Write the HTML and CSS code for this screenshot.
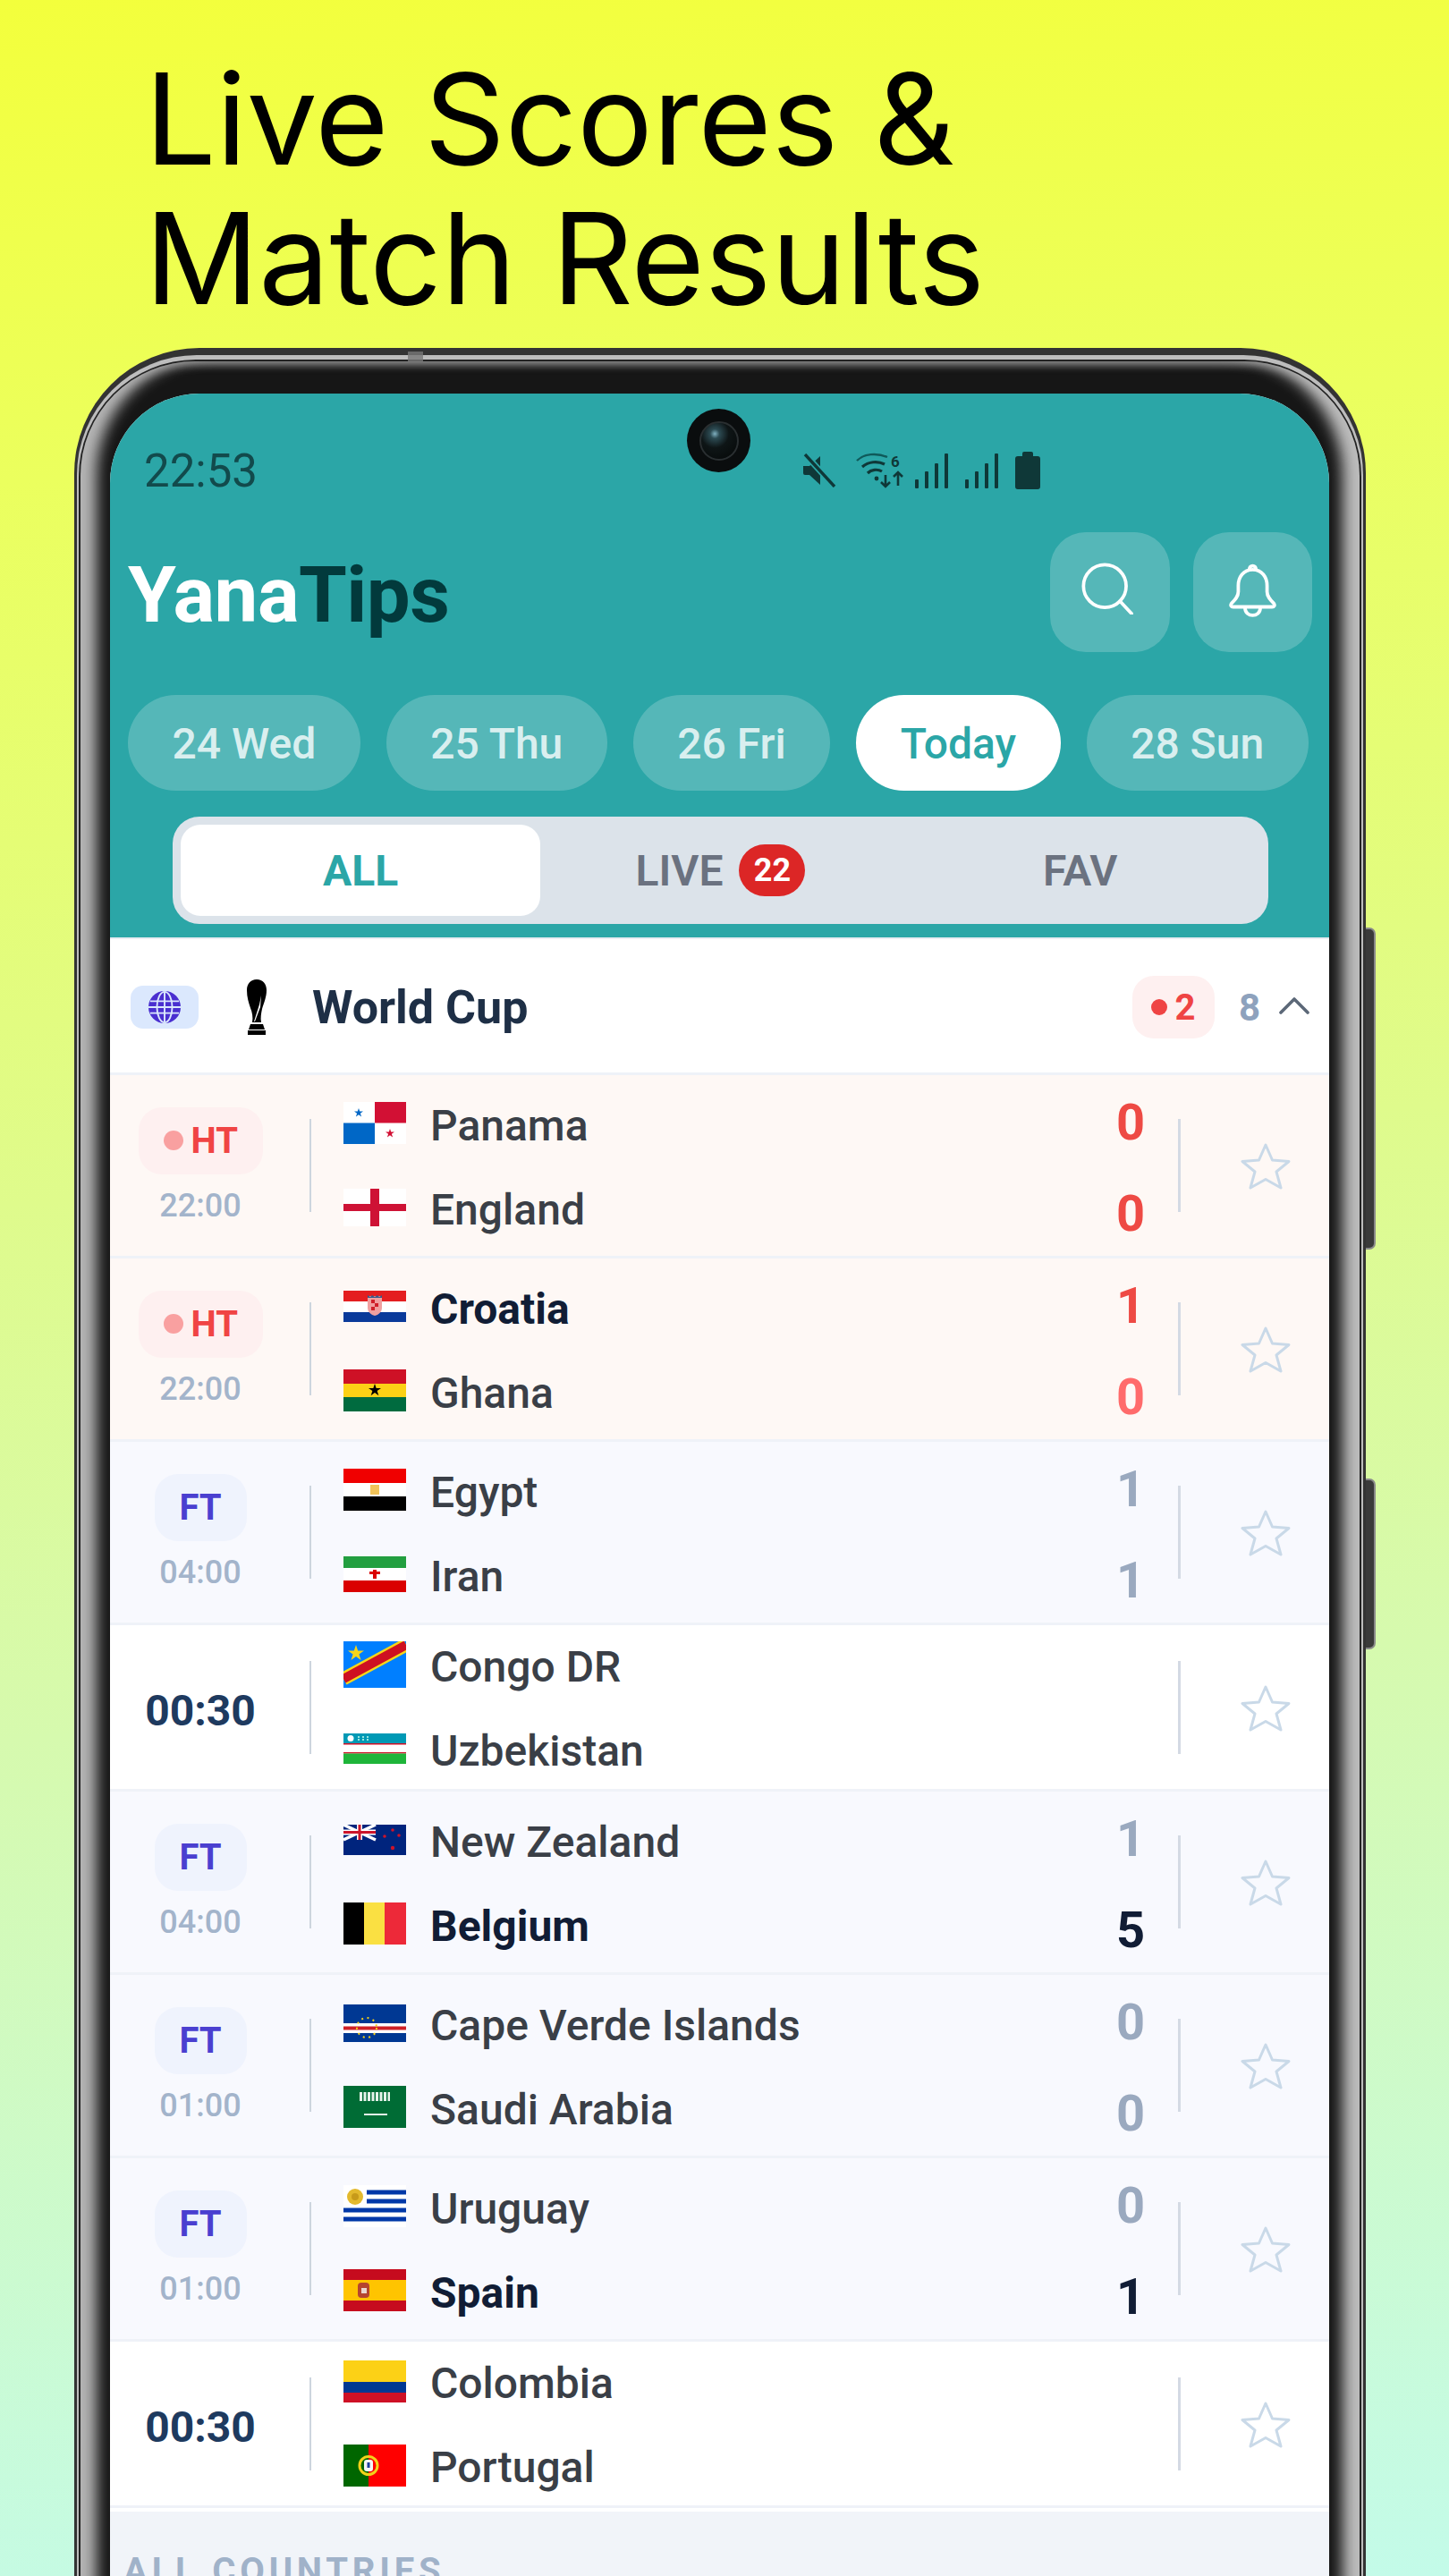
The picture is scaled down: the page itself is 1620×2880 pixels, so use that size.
FILE: index.html
```html
<!DOCTYPE html>
<html lang="en">
<head>
<meta charset="utf-8">
<title>YanaTips</title>
<link rel="stylesheet" href="styles.css">
</head>
<body>
<svg class="defs" xmlns="http://www.w3.org/2000/svg">
  <symbol id="star" viewBox="0 0 56 54"><polygon points="28,3 35.5,20 54,21.5 40,33 45,51 28,41.5 11,51 16,33 2,21.5 20.5,20" fill="none" stroke="currentColor" stroke-width="3" stroke-linejoin="round"/></symbol>
  <symbol id="pt" viewBox="0 0 10 10"><polygon points="5,0 6.2,3.6 10,3.6 6.9,5.8 8.1,9.5 5,7.2 1.9,9.5 3.1,5.8 0,3.6 3.8,3.6"/></symbol>
</svg>
<h1 class="headline">Live Scores &amp;<br>Match Results</h1>
<div class="phone">
  <span class="side-btn side-btn-a"></span>
  <span class="side-btn side-btn-b"></span>
  <div class="ring">
    <div class="rim">
      <div class="bezel">
        <div class="screen">
          <span class="camera"><span class="lens"></span></span>
          <header class="head">
            <div class="statusbar">
              <span class="clock">22:53</span>
              <div class="status-icons">
                <svg class="si si-mute" viewBox="0 0 38 38"><path d="M1 14h7L20 3v32L8 24H3a2 2 0 0 1-2-2z" fill="#0f3838"/><path d="M3 1l33 36" stroke="#2aa7a8" stroke-width="7"/><path d="M3 1l33 36" stroke="#0f3838" stroke-width="3.4"/></svg>
                <svg class="si si-wifi" viewBox="0 0 54 40"><path d="M1 9C9 1 23 0 35 5" fill="none" stroke="#0f5a5a" stroke-width="2.4"/><path d="M7 16c7-6 17-7 25-3M13 23c4-4 11-5 16-2" fill="none" stroke="#0f3838" stroke-width="3.2"/><circle cx="23" cy="29" r="2.4" fill="#0f3838"/><text x="39" y="16" class="si-six">6</text><path d="M33 25v13m-5-5l5 5 5-5M47 37V22m-5 5l5-5 5 5" fill="none" stroke="#0f3838" stroke-width="2.6"/></svg>
                <svg class="si si-sig" viewBox="0 0 37 39"><g fill="#0f3838"><rect x="0" y="29" width="4" height="10" rx="1"/><rect x="11" y="20" width="4" height="19" rx="1"/><rect x="22" y="11" width="4" height="28" rx="1"/><rect x="33" y="0" width="4" height="39" rx="1"/></g></svg>
                <svg class="si si-sig si-sig-b" viewBox="0 0 37 39"><g fill="#0f3838"><rect x="0" y="29" width="4" height="10" rx="1"/><rect x="11" y="20" width="4" height="19" rx="1"/><rect x="22" y="11" width="4" height="28" rx="1"/><rect x="33" y="0" width="4" height="39" rx="1"/></g></svg>
                <svg class="si si-bat" viewBox="0 0 28 42"><path d="M8 2a2 2 0 0 1 2-2h8a2 2 0 0 1 2 2v3h5a3 3 0 0 1 3 3v31a3 3 0 0 1-3 3H3a3 3 0 0 1-3-3V8a3 3 0 0 1 3-3h5z" fill="#0f3838"/></svg>
              </div>
            </div>
            <div class="topbar">
              <div class="logo"><span class="logo-a">Yana</span><span class="logo-b">Tips</span></div>
              <div class="top-actions">
                <button class="icon-btn"><svg class="ico-search" viewBox="0 0 62 62"><circle cx="28" cy="28" r="25.5" fill="none" stroke="#fff" stroke-width="4"/><path d="M46 46l14 15" stroke="#fff" stroke-width="4" stroke-linecap="round"/></svg></button>
                <button class="icon-btn icon-btn-b"><svg class="ico-bell" viewBox="0 0 56 64"><path d="M28 7C17 7 11 16 11 26v7c0 6-4 10-8 14-1.500 2-.5 4 2 4h46c2.500 0 3.500-2 2-4-4-4-8-8-8-14v-7C45 16 39 7 28 7z" fill="none" stroke="#fff" stroke-width="4" stroke-linejoin="round"/><path d="M24 7c0-6 8-6 8 0M19 52c0 12 18 12 18 0" fill="none" stroke="#fff" stroke-width="4"/></svg></button>
              </div>
            </div>
            <nav class="dates">
              <span class="date">24 Wed</span>
              <span class="date">25 Thu</span>
              <span class="date">26 Fri</span>
              <span class="date date-on">Today</span>
              <span class="date">28 Sun</span>
            </nav>
            <div class="tabs">
              <span class="tab tab-on">ALL</span>
              <span class="tab">LIVE <b class="badge">22</b></span>
              <span class="tab">FAV</span>
            </div>
          </header>

          <section class="league">
            <span class="globe-badge"><svg class="ico-globe" viewBox="0 0 40 40"><circle cx="20" cy="20" r="19" fill="#4a2fd0"/><g fill="none" stroke="#dbe8fd" stroke-width="2"><ellipse cx="20" cy="20" rx="9" ry="18"/><path d="M20 2v36M3 13h34M1 20h38M3 27h34"/></g></svg></span>
            <svg class="ico-trophy" viewBox="0 0 24 62"><path d="M12 0c7 0 11 5 11 12 0 8-3 14-5 21-1 5-2 10-1 15H7c1-6 0-11-2-16C3 26 1 20 1 12 1 5 5 0 12 0z" fill="#000"/><path d="M17 18l-1 13-6 16h-1l6-19z" fill="#fff"/><path d="M5 50h14l2 6H3zM2 57h20v5H2z" fill="#000"/></svg>
            <span class="league-name">World Cup</span>
            <span class="live-pill"><i class="live-dot"></i>2</span>
            <span class="league-count">8</span>
            <svg class="ico-chevron" viewBox="0 0 34 20"><path d="M2 18L17 3l15 15" fill="none" stroke="#5c6878" stroke-width="3.600" stroke-linecap="round" stroke-linejoin="round"/></svg>
          </section>

          <article class="row row-live">
            <div class="state"><span class="pill pill-ht"><i class="ht-dot"></i>HT</span><span class="kick">22:00</span></div>
            <span class="sep"></span>
            <div class="teams">
              <div class="team"><svg class="flag flag-47" viewBox="0 0 70 47"><rect width="70" height="47" fill="#fff"/><rect x="35" width="35" height="23.500" fill="#d21034"/><rect y="23.500" width="35" height="23.500" fill="#0067c6"/><use href="#pt" x="12" y="7" width="10" height="10" fill="#0067c6"/><use href="#pt" x="47" y="30" width="10" height="10" fill="#d21034"/></svg><span class="name">Panama</span></div>
              <div class="team"><svg class="flag flag-42" viewBox="0 0 70 42"><rect width="70" height="42" fill="#fff"/><rect x="30" width="10" height="42" fill="#ce1235"/><rect y="17" width="70" height="8" fill="#ce1235"/></svg><span class="name">England</span></div>
            </div>
            <div class="scores"><span class="sc sc-red">0</span><span class="sc sc-red">0</span></div>
            <span class="sep sep-b"></span>
            <svg class="star"><use href="#star"/></svg>
          </article>

          <article class="row row-live">
            <div class="state"><span class="pill pill-ht"><i class="ht-dot"></i>HT</span><span class="kick">22:00</span></div>
            <span class="sep"></span>
            <div class="teams">
              <div class="team"><svg class="flag flag-35" viewBox="0 0 70 35"><rect width="70" height="12" fill="#e41e20"/><rect y="12" width="70" height="12" fill="#fff"/><rect y="24" width="70" height="11" fill="#0a3a9a"/><path d="M27 6h16v13c0 5-4 8-8 9-4-1-8-4-8-9z" fill="#f0a0a0"/><path d="M27 5l3 2 2-2 3 2 3-2 2 2 3-2v3H27z" fill="#3a5a8a"/><path d="M31 10h4v4h-4zM35 14h4v4h-4zM31 18h4v4h-4z" fill="#d0202a"/></svg><span class="name name-win">Croatia</span></div>
              <div class="team"><svg class="flag flag-47" viewBox="0 0 70 47"><rect width="70" height="16" fill="#ce1126"/><rect y="16" width="70" height="15" fill="#fcd116"/><rect y="31" width="70" height="16" fill="#006b3f"/><use href="#pt" x="28" y="16" width="14" height="14" fill="#000"/></svg><span class="name">Ghana</span></div>
            </div>
            <div class="scores"><span class="sc sc-red">1</span><span class="sc sc-redlo">0</span></div>
            <span class="sep sep-b"></span>
            <svg class="star"><use href="#star"/></svg>
          </article>

          <article class="row row-ft">
            <div class="state"><span class="pill pill-ft">FT</span><span class="kick">04:00</span></div>
            <span class="sep"></span>
            <div class="teams">
              <div class="team"><svg class="flag flag-47" viewBox="0 0 70 47"><rect width="70" height="16" fill="#f00000"/><rect y="16" width="70" height="15" fill="#fff"/><rect y="31" width="70" height="16" fill="#000"/><rect x="30" y="18" width="10" height="11" fill="#f2c45a"/></svg><span class="name">Egypt</span></div>
              <div class="team"><svg class="flag flag-40" viewBox="0 0 70 40"><rect width="70" height="13" fill="#239f40"/><rect y="13" width="70" height="14" fill="#fff"/><rect y="27" width="70" height="13" fill="#da0000"/><path d="M33 15h4v10h-4zM29 17h12v3H29z" fill="#da0000"/></svg><span class="name">Iran</span></div>
            </div>
            <div class="scores"><span class="sc">1</span><span class="sc">1</span></div>
            <span class="sep sep-b"></span>
            <svg class="star"><use href="#star"/></svg>
          </article>

          <article class="row row-up">
            <div class="state"><span class="kick-big">00:30</span></div>
            <span class="sep"></span>
            <div class="teams">
              <div class="team"><svg class="flag flag-52" viewBox="0 0 70 52"><rect width="70" height="52" fill="#007fff"/><path d="M0 42L70 4" stroke="#f7d618" stroke-width="15"/><path d="M0 42L70 4" stroke="#ce1021" stroke-width="10"/><use href="#pt" x="5" y="4" width="18" height="18" fill="#f7d618"/></svg><span class="name">Congo DR</span></div>
              <div class="team"><svg class="flag flag-34" viewBox="0 0 70 34"><rect width="70" height="34" fill="#fff"/><rect width="70" height="11" fill="#0099b5"/><rect y="11" width="70" height="1.500" fill="#ce1126"/><rect y="21" width="70" height="1.500" fill="#ce1126"/><rect y="22.500" width="70" height="11.500" fill="#1eb53a"/><circle cx="8" cy="5.500" r="3.500" fill="#fff"/><path d="M16 4h2M21 4h2M26 4h2M16 7h2M21 7h2M26 7h2" stroke="#cfe" stroke-width="1.500"/></svg><span class="name">Uzbekistan</span></div>
            </div>
            <div class="scores"></div>
            <span class="sep sep-b"></span>
            <svg class="star"><use href="#star"/></svg>
          </article>

          <article class="row row-ft">
            <div class="state"><span class="pill pill-ft">FT</span><span class="kick">04:00</span></div>
            <span class="sep"></span>
            <div class="teams">
              <div class="team"><svg class="flag flag-34" viewBox="0 0 70 34"><rect width="70" height="34" fill="#00247d"/><path d="M0 0l36 17M36 0L0 17" stroke="#fff" stroke-width="3.500"/><path d="M18 0v17M0 8.500h36" stroke="#fff" stroke-width="6"/><path d="M18 0v17M0 8.500h36" stroke="#cc142b" stroke-width="3"/><g fill="#cc142b"><circle cx="55" cy="6" r="1.800"/><circle cx="46" cy="13" r="1.800"/><circle cx="62" cy="12" r="1.800"/><circle cx="55" cy="26" r="2.200"/></g></svg><span class="name">New Zealand</span></div>
              <div class="team"><svg class="flag flag-47" viewBox="0 0 70 47"><rect width="24" height="47" fill="#000"/><rect x="23" width="24" height="47" fill="#fae042"/><rect x="46" width="24" height="47" fill="#ed2939"/></svg><span class="name name-win">Belgium</span></div>
            </div>
            <div class="scores"><span class="sc">1</span><span class="sc sc-win">5</span></div>
            <span class="sep sep-b"></span>
            <svg class="star"><use href="#star"/></svg>
          </article>

          <article class="row row-ft">
            <div class="state"><span class="pill pill-ft">FT</span><span class="kick">01:00</span></div>
            <span class="sep"></span>
            <div class="teams">
              <div class="team"><svg class="flag flag-42" viewBox="0 0 70 42"><rect width="70" height="42" fill="#003893"/><rect y="21" width="70" height="11" fill="#fff"/><rect y="24.500" width="70" height="4" fill="#cf2027"/><circle cx="26" cy="26" r="11" fill="none" stroke="#f7d116" stroke-width="2" stroke-dasharray="2 4.500"/></svg><span class="name">Cape Verde Islands</span></div>
              <div class="team"><svg class="flag flag-47" viewBox="0 0 70 47"><rect width="70" height="47" fill="#006c35"/><path d="M18 12h34" stroke="#e6f2ea" stroke-width="10" stroke-dasharray="3 1.500"/><path d="M23 32h26" stroke="#e6f2ea" stroke-width="2"/></svg><span class="name">Saudi Arabia</span></div>
            </div>
            <div class="scores"><span class="sc">0</span><span class="sc">0</span></div>
            <span class="sep sep-b"></span>
            <svg class="star"><use href="#star"/></svg>
          </article>

          <article class="row row-ft">
            <div class="state"><span class="pill pill-ft">FT</span><span class="kick">01:00</span></div>
            <span class="sep"></span>
            <div class="teams">
              <div class="team"><svg class="flag flag-47" viewBox="0 0 70 47"><rect width="70" height="47" fill="#fff"/><path d="M26 8h44M26 18h44M0 28h70M0 38h70" stroke="#0038a8" stroke-width="5"/><circle cx="13" cy="13" r="9" fill="#e3b92d"/><circle cx="13" cy="13" r="4" fill="#c79a1a"/></svg><span class="name">Uruguay</span></div>
              <div class="team"><svg class="flag flag-47" viewBox="0 0 70 47"><rect width="70" height="47" fill="#c60b1e"/><rect y="12" width="70" height="23" fill="#ffc400"/><rect x="16" y="15" width="13" height="17" rx="4" fill="#b5452f"/><rect x="20" y="21" width="6" height="6" fill="#e9d7d0"/></svg><span class="name name-win">Spain</span></div>
            </div>
            <div class="scores"><span class="sc">0</span><span class="sc sc-win">1</span></div>
            <span class="sep sep-b"></span>
            <svg class="star"><use href="#star"/></svg>
          </article>

          <article class="row row-up">
            <div class="state"><span class="kick-big">00:30</span></div>
            <span class="sep"></span>
            <div class="teams">
              <div class="team"><svg class="flag flag-47" viewBox="0 0 70 47"><rect width="70" height="24" fill="#fcd116"/><rect y="24" width="70" height="12" fill="#003893"/><rect y="36" width="70" height="11" fill="#ce1126"/></svg><span class="name">Colombia</span></div>
              <div class="team"><svg class="flag flag-47" viewBox="0 0 70 47"><rect width="28" height="47" fill="#006600"/><rect x="28" width="42" height="47" fill="#f00"/><circle cx="28" cy="23.500" r="10" fill="none" stroke="#f2d21a" stroke-width="3"/><rect x="23" y="17" width="10" height="13" rx="3" fill="#f4f4f4"/><rect x="26.500" y="20" width="3" height="6" fill="#1c3fa0"/></svg><span class="name">Portugal</span></div>
            </div>
            <div class="scores"></div>
            <span class="sep sep-b"></span>
            <svg class="star"><use href="#star"/></svg>
          </article>

          <section class="countries"><h2 class="countries-title">ALL COUNTRIES</h2></section>
        </div>
      </div>
    </div>
  </div>
  <span class="antenna"></span>
</div>
</body>
</html>
```

FILE: styles.css
```css
* { box-sizing: border-box; }
html, body { margin: 0; padding: 0; }
body {
  width: 1620px;
  height: 2880px;
  overflow: hidden;
  font-family: Roboto, "Liberation Sans", sans-serif;
  background: linear-gradient(176deg, #f3ff3c 0%, #ebff5e 18%, #dffb8c 45%, #d6faae 65%, #c3fbe9 100%);
}
.defs { display: none; }

.headline {
  margin: 0;
  padding: 55px 0 0 162px;
  font-family: Inter, "Liberation Sans", sans-serif;
  font-weight: 400;
  font-size: 141px;
  line-height: 156px;
  color: #000;
}

/* device frame */
.phone {
  position: relative;
  margin: 22px 0 0 83px;
  width: 1444px;
  padding: 8px 3px 0;
  background: #333;
  border-radius: 140px;
}
.side-btn {
  position: absolute;
  left: 100%;
  width: 11px;
  background: #3a3a3a;
  border: 2px solid #8a8a8a;
  border-left: 0;
  border-radius: 0 7px 7px 0;
}
.side-btn-a { top: 648px; height: 360px; }
.side-btn-b { top: 1264px; height: 191px; }
.antenna {
  position: absolute;
  left: 373px;
  top: 4px;
  width: 17px;
  height: 12px;
  background: rgba(120, 120, 120, .8);
}
.ring {
  padding: 5px 2px 0;
  border-radius: 134px;
  background: #bdbdbd;
}
.rim {
  padding: 2px 2px 0;
  border-radius: 131px;
  background: #222;
}
.bezel {
  padding: 36px 34px 0 33px;
  border-radius: 128px;
  background: #161616;
  box-shadow:
    inset 24px 0 16px -6px #b4b4b4,
    inset -25px 0 16px -6px #bcbcbc,
    inset 0 6px 10px -2px #6a6a6a;
}
.screen {
  position: relative;
  overflow: hidden;
  width: 1363px;
  border-radius: 100px 100px 0 0;
  background: #fff;
}
.camera {
  position: absolute;
  left: 645px;
  top: 17px;
  width: 71px;
  height: 71px;
  border-radius: 50%;
  background: #0a0d0e;
  display: flex;
  align-items: center;
  justify-content: center;
}
.lens {
  width: 44px;
  height: 44px;
  border-radius: 50%;
  border: 2px solid #2a2f31;
  background: radial-gradient(circle at 38% 30%, #7fb0c0 0, #2c4a52 14%, #0e1516 42%, #050707 100%);
}

/* header */
.head { background: #2ba6a7; padding-bottom: 15px; }
.statusbar {
  height: 130px;
  padding: 42px 0 0 38px;
  display: flex;
  align-items: center;
}
.clock { font-size: 51px; color: #124a4c; width: 736px; }
.status-icons { display: flex; align-items: center; }
.si { display: block; }
.si-mute { width: 38px; height: 38px; }
.si-wifi { width: 54px; height: 40px; margin-left: 22px; }
.si-six { font-family: Roboto, sans-serif; font-size: 17px; font-weight: 700; fill: #0f3838; }
.si-sig { width: 37px; height: 39px; margin-left: 12px; }
.si-sig-b { margin-left: 19px; }
.si-bat { width: 28px; height: 42px; margin-left: 19px; }

.topbar {
  margin-top: 25px;
  height: 134px;
  padding: 0 19px 0 20px;
  display: flex;
  align-items: center;
  justify-content: space-between;
}
.logo { padding-top: 6px; font-size: 87px; font-weight: 700; line-height: 1; letter-spacing: -.5px; }
.logo-a { color: #fff; }
.logo-b { color: #023a3c; }
.top-actions { display: flex; gap: 26px; }
.icon-btn {
  width: 134px;
  height: 134px;
  padding: 0;
  border: 0;
  border-radius: 40px;
  background: rgba(255, 255, 255, .2);
  display: flex;
  align-items: center;
  justify-content: center;
}
.icon-btn-b { width: 133px; }
.ico-search { width: 58px; height: 58px; margin: 0 6px 8px 0; }
.ico-bell { width: 53px; height: 61px; margin-bottom: 4px; }

.dates {
  margin-top: 48px;
  padding-left: 20px;
  display: flex;
  gap: 29px;
}
.date {
  height: 107px;
  padding: 0 49.500px;
  border-radius: 54px;
  background: rgba(255, 255, 255, .2);
  color: rgba(255, 255, 255, .8);
  font-size: 48px;
  font-weight: 500;
  line-height: 109px;
  white-space: nowrap;
}
.date-on { background: #fff; color: #2ba6a7; }

.tabs {
  margin: 29px 0 0 70px;
  width: 1225px;
  height: 120px;
  padding: 9px;
  border-radius: 30px;
  background: #dce3ea;
  display: grid;
  grid-template-columns: repeat(3, 1fr);
}
.tab {
  display: flex;
  align-items: center;
  justify-content: center;
  gap: 18px;
  font-size: 48px;
  font-weight: 600;
  color: #6b7280;
  border-radius: 22px;
}
.tab-on { background: #fff; color: #2ba6a7; font-weight: 700; }
.badge {
  width: 74px;
  height: 58px;
  border-radius: 29px;
  background: #dc2626;
  color: #fff;
  font-size: 36px;
  font-weight: 700;
  display: flex;
  align-items: center;
  justify-content: center;
}

/* league */
.league {
  height: 154px;
  padding: 3px 22px 0 23px;
  display: flex;
  align-items: center;
  background: #fff;
  border-top: 2px solid #e8ecf2;
  border-bottom: 3px solid #eef2f8;
}
.globe-badge {
  width: 76px;
  height: 48px;
  border-radius: 14px;
  background: #dbe8fd;
  display: flex;
  align-items: center;
  justify-content: center;
}
.ico-globe { width: 38px; height: 38px; }
.ico-trophy { width: 24px; height: 62px; margin-left: 53px; }
.league-name { margin-left: 50px; font-size: 52px; font-weight: 700; color: #1e2f46; flex: 1; }
.live-pill {
  width: 92px;
  height: 70px;
  border-radius: 24px;
  background: #fef0f0;
  color: #ef4444;
  font-size: 40px;
  font-weight: 700;
  display: flex;
  align-items: center;
  justify-content: center;
  gap: 8px;
}
.live-dot { width: 18px; height: 18px; border-radius: 50%; background: #ef4444; }
.league-count { margin-left: 27px; font-size: 42px; font-weight: 700; color: #8ea2bd; }
.ico-chevron { width: 34px; height: 20px; margin-left: 21px; margin-top: -4px; }

/* rows */
.row {
  height: 205px;
  display: flex;
  align-items: center;
  border-bottom: 3px solid #eff2f8;
}
.row-live { background: #fef8f5; }
.row-ft { background: #f8f9fe; }
.row-up { background: #fff; height: 186px; }
.state {
  width: 202px;
  display: flex;
  flex-direction: column;
  align-items: center;
}
.pill {
  height: 75px;
  border-radius: 26px;
  font-size: 40px;
  font-weight: 700;
  display: flex;
  align-items: center;
}
.pill-ht { width: 139px; padding-left: 28px; gap: 9px; background: #fef0f0; color: #f04444; }
.pill-ft { width: 103px; justify-content: center; background: #eff3fd; color: #4a3fd0; }
.ht-dot { width: 22px; height: 22px; border-radius: 50%; background: #f9a0a0; }
.kick { margin-top: 14px; font-size: 36px; line-height: 42px; font-weight: 500; color: #a3b4cb; }
.kick-big { padding-top: 8px; font-size: 48px; font-weight: 700; color: #1e3a5f; }
.sep { width: 2px; height: 104px; margin-left: 21px; background: #cdd5de; }
.sep-b { width: 3px; margin-left: 23px; background: #d4dae4; }
.teams { flex: 1; margin: 4px 0 0 36px; }
.team { height: 94px; display: flex; align-items: center; }
.flag { display: block; width: 70px; flex: none; margin-top: -5px; }
.flag-34 { height: 34px; }
.flag-35 { height: 35px; }
.flag-40 { height: 40px; }
.flag-42 { height: 42px; }
.flag-47 { height: 47px; }
.flag-52 { height: 52px; }
.name { margin-left: 27px; font-size: 48px; font-weight: 500; color: #3a3f47; white-space: nowrap; }
.name-win { font-weight: 700; color: #111d35; }
.scores { width: 60px; margin-top: 6px; display: flex; flex-direction: column; align-items: center; }
.sc { height: 102px; line-height: 102px; font-size: 56px; font-weight: 700; color: #9aa9bf; }
.sc-red { color: #ee4a44; }
.sc-redlo { color: #ff6b6b; }
.sc-win { color: #111d35; }
.star { width: 56px; height: 54px; margin: 2px 43px 0 67px; color: #c9d9e8; }

.countries { margin-top: 4px; padding: 43px 0 150px 15px; background: #f1f4f9; }
.countries-title {
  margin: 0;
  font-size: 40px;
  font-weight: 700;
  line-height: 48px;
  letter-spacing: 4.800px;
  color: #a0b2c9;
}
```
